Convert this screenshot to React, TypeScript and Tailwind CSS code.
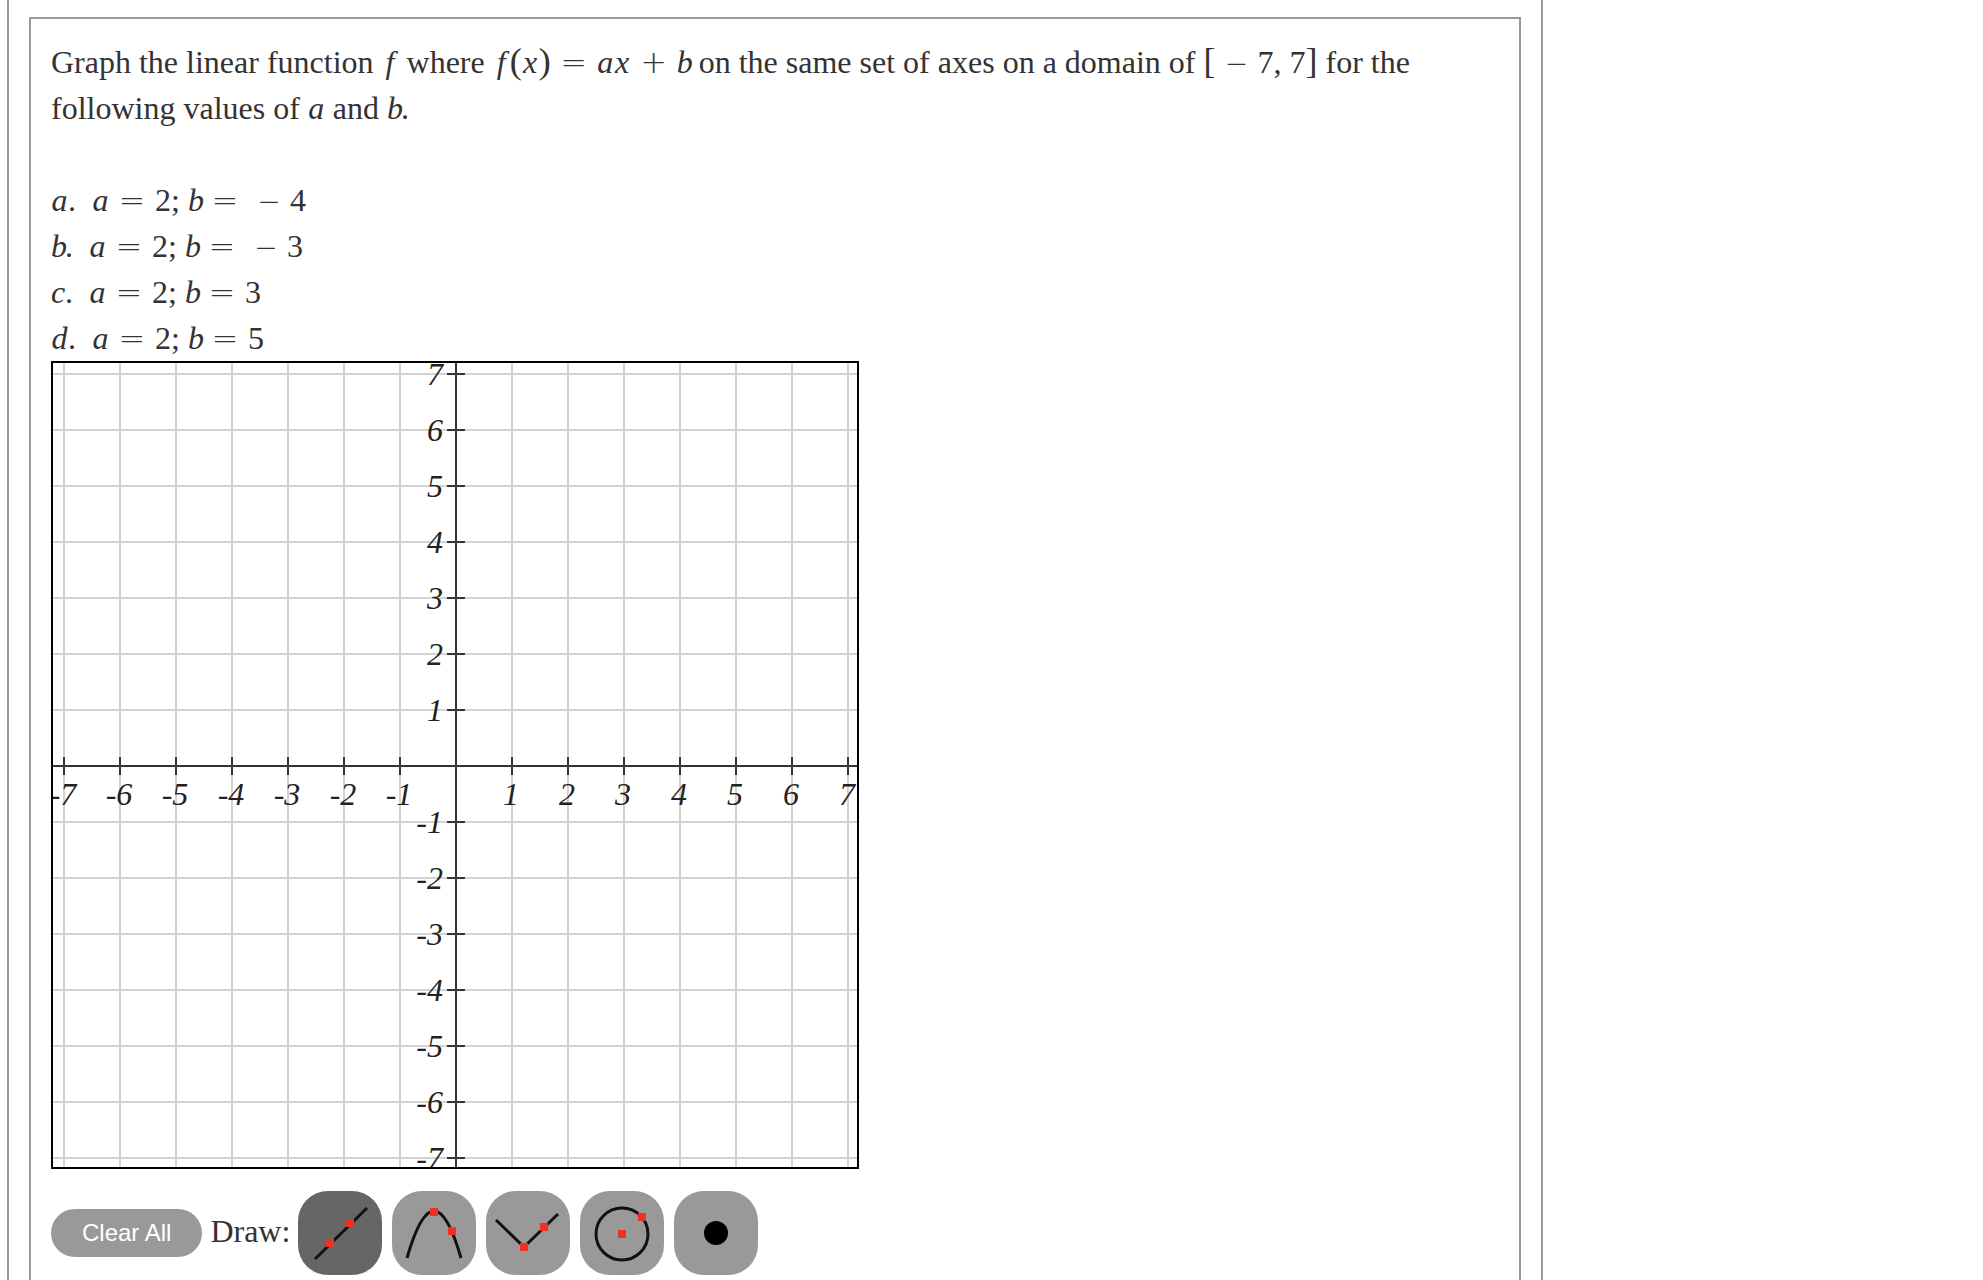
import { useState } from "react";
import type { ReactNode } from "react";
import { clsx } from "clsx";

type Tool = "line" | "parabola" | "abs" | "circle" | "dot";
type Letter = "a" | "b" | "c" | "d" | "f" | "x";

const SIZE = 804;
const CENTER = SIZE / 2 + 1;
const UNIT = 56;
const TICK = 9;
const VALUES = [-7, -6, -5, -4, -3, -2, -1, 1, 2, 3, 4, 5, 6, 7];

const PARTS: { label: Letter; b: number; negative: boolean }[] = [
  { label: "a", b: 4, negative: true },
  { label: "b", b: 3, negative: true },
  { label: "c", b: 3, negative: false },
  { label: "d", b: 5, negative: false },
];

const letterWidth: Record<Letter, string> = {
  a: "w-[17px]",
  b: "w-[14px]",
  c: "w-[14px]",
  d: "w-[17px]",
  f: "w-[17px]",
  x: "w-[17px]",
};

const Var = ({ name }: { name: Letter }) => (
  <i className={clsx("inline-block text-center", letterWidth[name])}>{name}</i>
);

const Op = ({ children }: { children: ReactNode }) => (
  <span className="mx-2 inline-block w-[30px] text-center font-['DejaVu_Sans',sans-serif] text-[32px] leading-none font-extralight">
    {children}
  </span>
);

const Minus = () => (
  <span className="mx-2 inline-block w-[26px] text-center font-['DejaVu_Sans',sans-serif] text-[28px] leading-none font-extralight">
    −
  </span>
);

const Fence = ({ children }: { children: ReactNode }) => (
  <span className="inline-block w-3 text-center text-[36px] leading-none">{children}</span>
);

const AxisGrid = () => (
  <svg
    viewBox={`0 0 ${SIZE} ${SIZE}`}
    className="block w-full"
    role="img"
    aria-label="Coordinate grid from -7 to 7"
  >
    <g stroke="#d3d3d3" strokeWidth="2">
      {VALUES.map((v) => (
        <g key={v}>
          <line x1={CENTER + v * UNIT} x2={CENTER + v * UNIT} y1="0" y2={SIZE} />
          <line y1={CENTER + v * UNIT} y2={CENTER + v * UNIT} x1="0" x2={SIZE} />
        </g>
      ))}
    </g>
    <g stroke="#333" strokeWidth="2">
      <line x1={CENTER} x2={CENTER} y1="0" y2={SIZE} />
      <line x1="0" x2={SIZE} y1={CENTER} y2={CENTER} />
      {VALUES.map((v) => (
        <g key={v}>
          <line
            x1={CENTER + v * UNIT}
            x2={CENTER + v * UNIT}
            y1={CENTER - TICK}
            y2={CENTER + TICK}
          />
          <line
            y1={CENTER - v * UNIT}
            y2={CENTER - v * UNIT}
            x1={CENTER - TICK}
            x2={CENTER + TICK}
          />
        </g>
      ))}
    </g>
    <g className="fill-[#222] font-['Liberation_Serif',serif] text-[32px] italic">
      {VALUES.map((v) => (
        <g key={v}>
          <text x={CENTER + v * UNIT - 1} y={CENTER + 39} textAnchor="middle">
            {v}
          </text>
          <text x={CENTER - 13} y={CENTER - v * UNIT + 11} textAnchor="end">
            {v}
          </text>
        </g>
      ))}
    </g>
  </svg>
);

const Handle = ({ x, y }: { x: number; y: number }) => (
  <rect x={x - 4} y={y - 4} width="8" height="8" fill="#ee3124" stroke="none" />
);

const TOOLS: { id: Tool; name: string; icon: ReactNode }[] = [
  {
    id: "line",
    name: "Line",
    icon: (
      <>
        <path d="M17 68 L69 17" />
        <Handle x={52} y={32} />
        <Handle x={32} y={52} />
      </>
    ),
  },
  {
    id: "parabola",
    name: "Parabola",
    icon: (
      <>
        <path d="M15 67 Q42 -27 69 67" />
        <Handle x={42} y={21} />
        <Handle x={60} y={40} />
      </>
    ),
  },
  {
    id: "abs",
    name: "Absolute value",
    icon: (
      <>
        <path d="M10 29 L38 56 L72 23" />
        <Handle x={38} y={56} />
        <Handle x={58} y={36} />
      </>
    ),
  },
  {
    id: "circle",
    name: "Circle",
    icon: (
      <>
        <circle cx="42" cy="43" r="26" />
        <Handle x={42} y={43} />
        <Handle x={62} y={26} />
      </>
    ),
  },
  {
    id: "dot",
    name: "Dot",
    icon: <circle cx="42" cy="42" r="12" fill="#000" stroke="none" />,
  },
];

const App = () => {
  const [tool, setTool] = useState<Tool>("line");

  return (
    <div className="min-h-screen bg-white font-['Liberation_Serif',serif] text-[32px] leading-[46px] text-[#333]">
      <div className="ml-[7px] flex min-h-screen max-w-[1536px] flex-col border-x-2 border-[#999] px-5 pt-[17px]">
        <main className="flex-1 border-2 border-b-0 border-[#999] px-5 pt-5">
          <p>
            Graph the linear function <Var name="f" /> where <Var name="f" />
            <Fence>(</Fence>
            <Var name="x" />
            <Fence>)</Fence>
            <Op>=</Op>
            <Var name="a" />
            <Var name="x" />
            <Op>+</Op>
            <Var name="b" /> on the same set of axes on a domain of <Fence>[</Fence>
            <Minus />
            7, 7<Fence>]</Fence> for the following values of <Var name="a" /> and{" "}
            <Var name="b" />.
          </p>
          <ol className="pt-[46px]">
            {PARTS.map((part) => (
              <li key={part.label}>
                <Var name={part.label} />.
                <span className="ml-4">
                  <Var name="a" />
                  <Op>=</Op>2; <Var name="b" />
                  <Op>=</Op>
                  {part.negative && <Minus />}
                  {part.b}
                </span>
              </li>
            ))}
          </ol>

          <div className="w-full max-w-[808px] border-2 border-black bg-white">
            <AxisGrid />
          </div>

          <div className="flex flex-wrap items-center gap-2 pt-[22px]">
            <button
              type="button"
              onClick={() => setTool("line")}
              className="h-12 rounded-full bg-[#999] px-[31px] font-['Liberation_Sans',sans-serif] text-2xl text-white"
            >
              Clear All
            </button>
            <span id="draw-label" className="pb-1">
              Draw:
            </span>
            <div role="group" aria-labelledby="draw-label" className="flex gap-2.5">
              {TOOLS.map(({ id, name, icon }) => (
                <button
                  key={id}
                  type="button"
                  aria-label={name}
                  aria-pressed={tool === id}
                  onClick={() => setTool(id)}
                  className={clsx(
                    "size-[84px] rounded-[30px]",
                    tool === id ? "bg-[#666]" : "bg-[#999]"
                  )}
                >
                  <svg viewBox="0 0 84 84" fill="none" stroke="#111" strokeWidth="3">
                    {icon}
                  </svg>
                </button>
              ))}
            </div>
          </div>
        </main>
      </div>
    </div>
  );
};

export default App;
